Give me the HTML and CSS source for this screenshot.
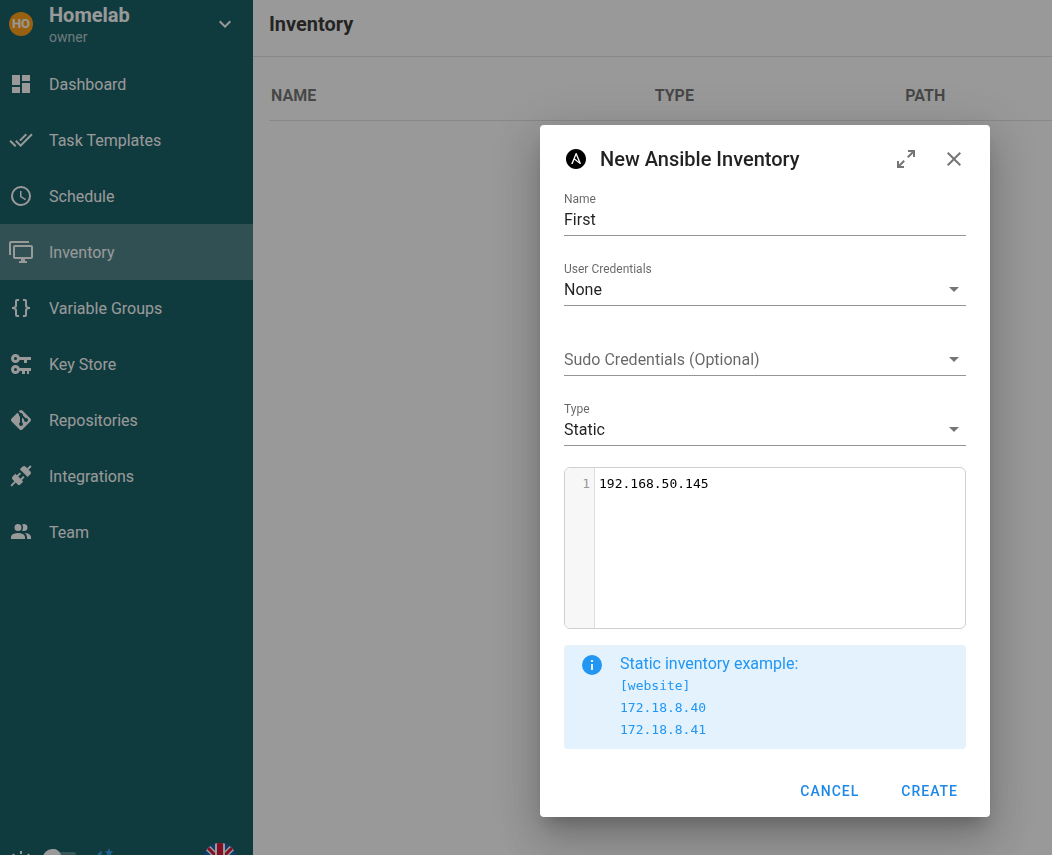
FILE: index.html
```html
<!DOCTYPE html>
<html lang="en">
<head>
<meta charset="utf-8">
<title>Inventory</title>
<link rel="stylesheet" href="styles.css">
</head>
<body>
<div class="app">
  <aside class="sidebar">
    <button class="project" type="button">
      <span class="avatar">HO</span>
      <span class="project-text"><span class="project-name">Homelab</span><span class="project-role">owner</span></span>
      <svg class="icon" viewBox="0 0 24 24"><path d="M7.41,8.58L12,13.17L16.59,8.58L18,10L12,16L6,10L7.41,8.58Z"/></svg>
    </button>
    <nav class="nav">
      <a href="#" class="nav-item"><svg class="icon" viewBox="0 0 24 24"><path d="M13,3V9H21V3M13,21H21V11H13M3,21H11V15H3M3,13H11V3H3V13Z"/></svg>Dashboard</a>
      <a href="#" class="nav-item"><svg class="icon" viewBox="0 0 24 24"><path d="M0.41,13.41L6,19L7.41,17.58L1.83,12M22.24,5.58L11.66,16.17L7.5,12L6.07,13.41L11.66,19L23.66,7M18,7L16.59,5.58L10.24,11.93L11.66,13.34L18,7Z"/></svg>Task Templates</a>
      <a href="#" class="nav-item"><svg class="icon" viewBox="0 0 24 24"><path d="M12,20A8,8 0 0,0 20,12A8,8 0 0,0 12,4A8,8 0 0,0 4,12A8,8 0 0,0 12,20M12,2A10,10 0 0,1 22,12A10,10 0 0,1 12,22C6.47,22 2,17.5 2,12A10,10 0 0,1 12,2M12.5,7V12.25L17,14.92L16.25,16.15L11,13V7H12.5Z"/></svg>Schedule</a>
      <a href="#" class="nav-item active" aria-current="page"><svg class="icon" viewBox="0 0 24 24"><path d="M22,17V7H6V17H22M22,5A2,2 0 0,1 24,7V17C24,18.11 23.1,19 22,19H16V21H18V23H10V21H12V19H6C4.89,19 4,18.11 4,17V7A2,2 0 0,1 6,5H22M2,3V15H0V3A2,2 0 0,1 2,1H20V3H2Z"/></svg>Inventory</a>
      <a href="#" class="nav-item"><svg class="icon" viewBox="0 0 24 24"><path d="M8,3A2,2 0 0,0 6,5V9A2,2 0 0,1 4,11H3V13H4A2,2 0 0,1 6,15V19A2,2 0 0,0 8,21H10V19H8V14A2,2 0 0,0 6,12A2,2 0 0,0 8,10V5H10V3M16,3A2,2 0 0,1 18,5V9A2,2 0 0,0 20,11H21V13H20A2,2 0 0,0 18,15V19A2,2 0 0,1 16,21H14V19H16V14A2,2 0 0,1 18,12A2,2 0 0,1 16,10V5H14V3H16Z"/></svg>Variable Groups</a>
      <a href="#" class="nav-item"><svg class="icon" viewBox="0 0 24 24"><path d="M6.5,2C8.46,2 10.13,3.25 10.74,5H22V8H18V11H15V8H10.74C10.13,9.75 8.46,11 6.5,11C4,11 2,9 2,6.5C2,4 4,2 6.5,2M6.5,5A1.5,1.5 0 0,0 5,6.5A1.5,1.5 0 0,0 6.5,8A1.5,1.5 0 0,0 8,6.5A1.5,1.5 0 0,0 6.5,5M6.5,13C8.46,13 10.13,14.25 10.74,16H22V19H20V22H18V19H16V22H13V19H10.74C10.13,20.75 8.46,22 6.5,22C4,22 2,20 2,17.5C2,15 4,13 6.5,13M6.5,16A1.5,1.5 0 0,0 5,17.5A1.5,1.5 0 0,0 6.5,19A1.5,1.5 0 0,0 8,17.5A1.5,1.5 0 0,0 6.5,16Z"/></svg>Key Store</a>
      <a href="#" class="nav-item"><svg class="icon" viewBox="0 0 24 24"><path d="M2.6,10.59L8.38,4.8L10.07,6.5C9.83,7.35 10.22,8.28 11,8.73V14.27C10.4,14.61 10,15.26 10,16A2,2 0 0,0 12,18A2,2 0 0,0 14,16C14,15.26 13.6,14.61 13,14.27V9.41L15.07,11.5C15,11.65 15,11.82 15,12A2,2 0 0,0 17,14A2,2 0 0,0 19,12A2,2 0 0,0 17,10C16.82,10 16.65,10 16.5,10.07L13.93,7.5C14.19,6.57 13.71,5.55 12.78,5.16C12.35,5 11.9,4.96 11.5,5.07L9.8,3.38L10.59,2.6C11.37,1.81 12.63,1.81 13.41,2.6L21.4,10.59C22.19,11.37 22.19,12.63 21.4,13.41L13.41,21.4C12.63,22.19 11.37,22.19 10.59,21.4L2.6,13.41C1.81,12.63 1.81,11.37 2.6,10.59Z"/></svg>Repositories</a>
      <a href="#" class="nav-item"><svg class="icon" viewBox="0 0 24 24"><path d="M21.4 7.5C22.2 8.3 22.2 9.6 21.4 10.3L18.6 13.1L10.8 5.3L13.6 2.5C14.4 1.7 15.7 1.7 16.4 2.5L18.2 4.3L21.2 1.3L22.6 2.7L19.6 5.7L21.4 7.5M15.6 13.3L14.2 11.9L11.4 14.7L9.3 12.6L12.1 9.8L10.7 8.4L7.9 11.2L6.4 9.8L3.6 12.6C2.8 13.4 2.8 14.7 3.6 15.4L5.4 17.2L1.4 21.2L2.8 22.6L6.8 18.6L8.6 20.4C9.4 21.2 10.7 21.2 11.4 20.4L14.2 17.6L12.8 16.2L15.6 13.3Z"/></svg>Integrations</a>
      <a href="#" class="nav-item"><svg class="icon" viewBox="0 0 24 24"><path d="M16 17V19H2V17S2 13 9 13 16 17 16 17M12.5 7.5A3.5 3.5 0 1 0 9 11A3.5 3.5 0 0 0 12.5 7.5M15.94 13A5.32 5.32 0 0 1 18 17V19H22V17S22 13.37 15.94 13M15 4A3.39 3.39 0 0 0 13.07 4.59A5 5 0 0 1 13.07 10.41A3.39 3.39 0 0 0 15 11A3.5 3.5 0 0 0 15 4Z"/></svg>Team</a>
    </nav>
    <div class="sidebar-footer">
      <svg class="icon" viewBox="0 0 24 24"><circle cx="12" cy="17" r="5"/><path stroke="currentColor" stroke-width="2" d="M12 8V11M4 11L6 14M20 11L18 14"/></svg>
      <label class="switch"><input type="checkbox" aria-label="Dark mode"></label>
      <svg class="icon moon" viewBox="0 0 24 24"><path d="M16 5L17.2 8.2H20.5L17.9 10.2L18.8 13.4L16 11.5L13.2 13.4L14.1 10.2L11.5 8.2H14.8Z"/><path d="M9 8C5 9 3 13 4 17A9 9 0 0 0 18 21C11 21 7 15 9 8Z"/></svg>
      <button class="language" type="button" aria-label="English">
        <svg viewBox="0 0 34 34"><defs><clipPath id="round"><circle cx="17" cy="17" r="17"/></clipPath></defs><g clip-path="url(#round)"><path fill="#0052b4" d="M0 0H34V34H0Z"/><path stroke="#fff" stroke-width="6" d="M0 0L34 34M34 0L0 34"/><path stroke="#d80027" stroke-width="3" d="M0 0L34 34M34 0L0 34"/><path stroke="#fff" stroke-width="10" d="M17 0V34M0 17H34"/><path stroke="#d80027" stroke-width="6" d="M17 0V34M0 17H34"/></g></svg>
      </button>
    </div>
  </aside>
  <main class="main">
    <header class="toolbar"><h1>Inventory</h1></header>
    <div class="table-wrap">
      <table class="table">
        <thead><tr><th class="col-name">NAME</th><th class="col-type">TYPE</th><th>PATH</th></tr></thead>
      </table>
    </div>
  </main>
</div>
<div class="overlay">
  <form class="dialog" role="dialog" aria-labelledby="dialog-title">
    <header class="dialog-head">
      <svg class="icon ansible" viewBox="-2.4 -2.4 28.8 28.8"><path d="M10.617 11.473l4.686 3.695-3.102-7.662zM12 0C5.371 0 0 5.371 0 12s5.371 12 12 12 12-5.371 12-12S18.629 0 12 0zm5.797 17.305c-.011.471-.403.842-.875.83-.236 0-.416-.09-.664-.293l-6.19-5-2.079 5.203H6.191L11.438 5.44c.124-.314.427-.52.764-.506.326-.014.63.189.742.506l4.774 11.494c.045.111.08.234.08.348z"/></svg>
      <h2 id="dialog-title">New Ansible Inventory</h2>
      <button class="icon-button" type="button" aria-label="Expand"><svg class="icon" viewBox="0 0 24 24"><path d="M10,21V19H6.41L10.91,14.5L9.5,13.09L5,17.59V14H3V21H10M14.5,10.91L19,6.41V10H21V3H14V5H17.59L13.09,9.5L14.5,10.91Z"/></svg></button>
      <button class="icon-button" type="button" aria-label="Close"><svg class="icon" viewBox="0 0 24 24"><path d="M19,6.41L17.59,5L12,10.59L6.41,5L5,6.41L10.59,12L5,17.59L6.41,19L12,13.41L17.59,19L19,17.59L13.41,12L19,6.41Z"/></svg></button>
    </header>
    <div class="field">
      <label for="name">Name</label>
      <input id="name" type="text" value="First">
    </div>
    <div class="field">
      <label for="user-cred">User Credentials</label>
      <div class="select"><select id="user-cred"><option>None</option></select><svg class="icon" viewBox="0 0 24 24"><path d="M7,10L12,15L17,10H7Z"/></svg></div>
    </div>
    <div class="field unlabelled">
      <div class="select"><select class="placeholder" aria-label="Sudo Credentials (Optional)"><option>Sudo Credentials (Optional)</option></select><svg class="icon" viewBox="0 0 24 24"><path d="M7,10L12,15L17,10H7Z"/></svg></div>
    </div>
    <div class="field">
      <label for="type">Type</label>
      <div class="select"><select id="type"><option>Static</option></select><svg class="icon" viewBox="0 0 24 24"><path d="M7,10L12,15L17,10H7Z"/></svg></div>
    </div>
    <div class="editor">
      <div class="gutter">1</div>
      <textarea aria-label="Inventory content" spellcheck="false">192.168.50.145</textarea>
    </div>
    <div class="alert">
      <svg class="icon" viewBox="0 0 24 24"><path d="M13,9H11V7H13M13,17H11V11H13M12,2A10,10 0 0,0 2,12A10,10 0 0,0 12,22A10,10 0 0,0 22,12A10,10 0 0,0 12,2Z"/></svg>
      <div class="alert-text">Static inventory example:<pre>[website]
172.18.8.40
172.18.8.41</pre></div>
    </div>
    <footer class="actions">
      <button class="text-button" type="button">CANCEL</button>
      <button class="text-button" type="submit">CREATE</button>
    </footer>
  </form>
</div>
</body>
</html>
```
FILE: styles.css
```css
* { box-sizing: border-box; }
body {
  margin: 0;
  font-family: Roboto, "Liberation Sans", sans-serif;
  font-size: 16px;
  line-height: 24px;
  color: rgba(0, 0, 0, .87);
}
button, input, select, textarea { font: inherit; color: inherit; border: 0; background: none; padding: 0; margin: 0; outline: 0; }
h1, h2, pre { margin: 0; }
.icon { width: 24px; height: 24px; flex: none; fill: currentColor; display: block; }

.app { display: flex; height: 100vh; overflow: hidden; }

.sidebar { width: 253px; flex: none; display: flex; flex-direction: column; background: #005057; color: #fff; }
.project { display: flex; align-items: center; height: 56px; padding: 0 16px 8px 9px; text-align: left; }
.avatar { width: 24px; height: 24px; flex: none; border-radius: 50%; background: #ff9800; font-size: 13px; font-weight: 700; text-align: center; }
.project-text { flex: 1; display: flex; flex-direction: column; margin-left: 16px; padding-top: 2px; }
.project-name { font-size: 20px; font-weight: 700; line-height: 24px; }
.project-role { font-size: 14px; line-height: 20px; color: rgba(255, 255, 255, .7); }
.nav-item { display: flex; align-items: center; gap: 16px; height: 56px; padding: 2px 0 0 9px; color: #fff; text-decoration: none; }
.nav-item .icon { margin-bottom: 2px; }
.active { background: rgba(255, 255, 255, .24); }

.sidebar-footer { display: flex; align-items: flex-start; height: 12px; margin-top: auto; padding: 0 16px 0 9px; overflow: hidden; }
.switch { margin: 6px 16px 0 10px; display: flex; }
.switch input { appearance: none; width: 34px; height: 18px; border-radius: 9px; background: radial-gradient(circle at 9px 9px, #fff 9px, transparent 10px), linear-gradient(transparent 3px, rgba(255, 255, 255, .3) 3px, rgba(255, 255, 255, .3) 15px, transparent 15px); }
.moon { color: #2196f3; }
.language { width: 34px; height: 34px; margin-left: auto; }
.language svg { display: block; }

.main { flex: 1; min-width: 0; }
.toolbar { height: 57px; padding: 12px 16px; border-bottom: 1px solid rgba(0, 0, 0, .12); }
h1 { font-size: 20px; line-height: 24px; font-weight: 700; }
.table-wrap { padding-left: 16px; }
.table { width: 100%; table-layout: fixed; border-collapse: separate; border-spacing: 0; }
.table th { height: 64px; padding: 15px 2px 0; border-bottom: 1px solid rgba(0, 0, 0, .12); text-align: left; color: rgba(0, 0, 0, .6); }
.col-name { width: 49%; }
.col-type { width: 32%; }

.overlay { position: fixed; inset: 0; display: flex; justify-content: flex-end; align-items: flex-start; padding: 125px 62px 38px 16px; background: rgba(33, 33, 33, .46); }
.dialog { width: 100%; max-width: 450px; padding: 0 24px 8px; border-radius: 4px; background: #fff; box-shadow: 0 11px 15px -7px rgba(0, 0, 0, .2), 0 24px 38px 3px rgba(0, 0, 0, .14), 0 9px 46px 8px rgba(0, 0, 0, .12); }
.dialog-head { display: flex; align-items: center; height: 68px; margin-right: -6px; }
h2 { flex: 1; margin-left: 12px; font-size: 20px; font-weight: 500; line-height: 32px; }
.ansible { color: #000; }
.icon-button { width: 36px; height: 36px; margin-left: 12px; display: grid; place-items: center; color: rgba(0, 0, 0, .54); }

.field { height: 70px; display: flex; flex-direction: column; }
.field label { font-size: 12px; line-height: 12px; color: rgba(0, 0, 0, .6); }
.field input, .select { width: 100%; height: 31px; border-bottom: 1px solid rgba(0, 0, 0, .42); }
.field input { padding-bottom: 2px; }
.unlabelled { padding-top: 12px; }
.select { display: flex; align-items: flex-start; }
.select select { appearance: none; flex: 1; height: 30px; }
.select .icon { margin-top: 2px; color: rgba(0, 0, 0, .54); }
.placeholder { color: rgba(0, 0, 0, .6); }

.editor { display: flex; height: 162px; margin-top: -6px; border: 1px solid #d0d0d0; border-radius: 6px; overflow: hidden; font-family: "DejaVu Sans Mono", monospace; font-size: 13px; line-height: 16px; }
.gutter { width: 30px; padding: 8px 4px 0 0; border-right: 1px solid #ddd; background: #f7f7f7; color: #999; text-align: right; }
.editor textarea { flex: 1; padding: 8px 4px; resize: none; color: #000; }

.alert { display: flex; gap: 16px; margin-top: 16px; padding: 8px 16px; border-radius: 4px; background: #e3f2fd; color: #2196f3; line-height: 22px; }
.alert pre { font-family: "DejaVu Sans Mono", monospace; font-size: 13px; }

.actions { display: flex; justify-content: flex-end; gap: 26px; height: 60px; padding-top: 24px; }
.text-button { height: 36px; padding: 0 8px; font-size: 14px; font-weight: 500; letter-spacing: 1px; color: #1e88e5; }
```
